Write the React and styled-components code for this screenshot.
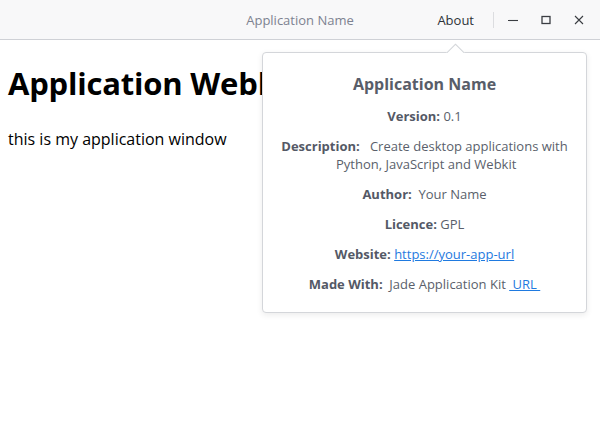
import React from "react";
import styled, { createGlobalStyle } from "styled-components";

const Global = createGlobalStyle`
  html, body { margin: 0; padding: 0; background: #fff; }
  body { font-family: "Open Sans", "Noto Sans", sans-serif; width: 600px; height: 441px; overflow: hidden; }
`;

const Window = styled.div`
  position: relative;
  width: 600px;
  height: 441px;
  background: #fff;
`;

const TitleBar = styled.header`
  position: relative;
  height: 40px;
  box-sizing: border-box;
  background: #f8f8f9;
  border-bottom: 1px solid #cfd1d6;
  display: flex;
  align-items: center;
  justify-content: flex-end;
  padding-right: 5px;
`;

const Title = styled.div`
  position: absolute;
  left: 0;
  right: 0;
  top: 0;
  height: 39px;
  display: flex;
  align-items: center;
  justify-content: center;
  font-size: 13px;
  color: #7d8290;
  pointer-events: none;
`;

const MenuButton = styled.div`
  font-size: 13px;
  color: #2e3238;
  padding: 0 19px 0 0;
`;

const Separator = styled.div`
  width: 1px;
  height: 16px;
  background: #dcdde0;
  margin-right: 2px;
`;

const WinButton = styled.div`
  width: 33px;
  height: 30px;
  display: flex;
  align-items: center;
  justify-content: center;
  color: #3a3d42;
`;

const Content = styled.main`
  padding: 0 8px;
`;

const Heading = styled.h1`
  margin: 21px 0 0;
  font-size: 31px;
  font-weight: 700;
  color: #000;
  line-height: 44px;
  letter-spacing: -0.2px;
`;

const Para = styled.p`
  margin: 23px 0 0;
  font-size: 16px;
  color: #000;
  line-height: 22px;
`;

const Popover = styled.div`
  position: absolute;
  left: 262px;
  top: 52px;
  width: 325px;
  height: 261px;
  box-sizing: border-box;
  background: #fff;
  border: 1px solid #d4d6da;
  border-radius: 4px;
  box-shadow: 0 2px 6px rgba(0, 0, 0, 0.08);
  padding: 19px 8px 0;
  text-align: center;
  color: #5a5f6b;
  font-size: 13px;
`;

const Arrow = styled.div`
  position: absolute;
  top: -12px;
  left: 181px;
  width: 22px;
  height: 12px;
  overflow: hidden;
  &::after {
    content: "";
    position: absolute;
    left: 3px;
    top: 6px;
    width: 15px;
    height: 15px;
    background: #fff;
    border: 1px solid #d4d6da;
    transform: rotate(45deg);
  }
`;

const PopTitle = styled.h2`
  margin: 0 0 12px;
  font-size: 16px;
  font-weight: 700;
  color: #585d69;
  line-height: 24px;
`;

const Row = styled.p`
  margin: 0 0 13px;
  line-height: ${(p) => p.$lh || 17}px;
  font-size: 13px;
`;

const Label = styled.b`
  font-weight: 700;
  color: #545966;
`;

const Link = styled.a`
  color: #1f7ae0;
  text-decoration: underline;
`;

const Minimize = () => (
  <svg width="12" height="12" viewBox="0 0 12 12"><path d="M1 6.5h10" stroke="currentColor" strokeWidth="1.1" /></svg>
);
const Maximize = () => (
  <svg width="12" height="12" viewBox="0 0 12 12"><rect x="2" y="2.5" width="8" height="7" fill="none" stroke="currentColor" strokeWidth="1.3" /></svg>
);
const Close = () => (
  <svg width="12" height="12" viewBox="0 0 12 12"><path d="M2 2l8 8M10 2l-8 8" stroke="currentColor" strokeWidth="1.1" /></svg>
);

export default function App() {
  return (
    <Window>
      <Global />
      <TitleBar>
        <Title>Application Name</Title>
        <MenuButton>About</MenuButton>
        <Separator />
        <WinButton><Minimize /></WinButton>
        <WinButton><Maximize /></WinButton>
        <WinButton><Close /></WinButton>
      </TitleBar>
      <Content>
        <Heading>Application Webkit</Heading>
        <Para>this is my application window</Para>
      </Content>
      <Popover>
        <Arrow />
        <PopTitle>Application Name</PopTitle>
        <Row><Label>Version:</Label> 0.1</Row>
        <Row $lh={17.5}><Label>Description:</Label>&nbsp;&nbsp; Create desktop applications with<br />&nbsp;Python, JavaScript and Webkit</Row>
        <Row><Label>Author:</Label>&nbsp; Your Name</Row>
        <Row><Label>Licence:</Label> GPL</Row>
        <Row><Label>Website:</Label> <Link href="#">https://your-app-url</Link></Row>
        <Row><Label>Made With:</Label>&nbsp; Jade Application Kit <Link href="#">&nbsp;URL&nbsp;</Link></Row>
      </Popover>
    </Window>
  );
}
